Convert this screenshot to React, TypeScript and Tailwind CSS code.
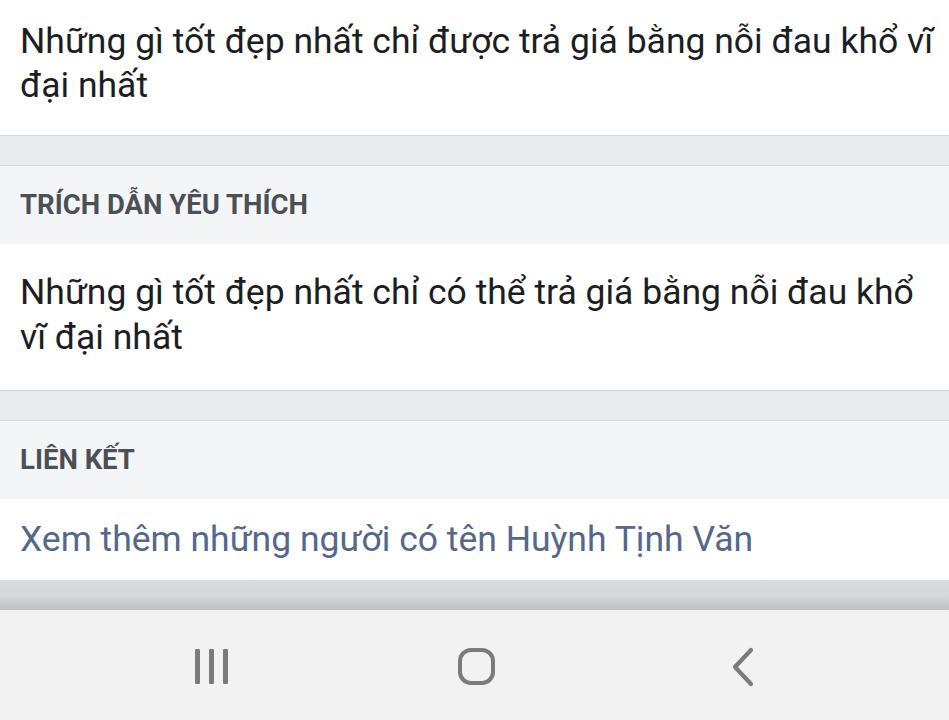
import React from "react";

const font = { fontFamily: "Roboto, 'Noto Sans', sans-serif" };

function Band() {
  return <div className="h-[31px] bg-[#e9eaee] border-y border-[#d6d7da]" />;
}

function Header({ children }: { children: React.ReactNode }) {
  return (
    <div className="h-[78px] bg-[#f4f5f7] flex items-center pl-5">
      <span className="text-[27.5px] font-bold text-[#4b4f56] leading-none">{children}</span>
    </div>
  );
}

export default function App() {
  return (
    <div className="w-[949px] h-[720px] overflow-hidden bg-white flex flex-col" style={font}>
      <div className="h-[135px] bg-white pl-5 pr-[12px] pt-[19px]">
        <p className="text-[35.5px] leading-[44px] text-[#1c1e21]">
          Những gì tốt đẹp nhất chỉ được trả giá bằng nỗi đau khổ vĩ đại nhất
        </p>
      </div>
      <Band />
      <Header>TRÍCH DẪN YÊU THÍCH</Header>
      <div className="h-[146px] bg-white pl-5 pr-[12px] pt-[26px]">
        <p className="text-[35.5px] leading-[45px] text-[#1c1e21]">
          Những gì tốt đẹp nhất chỉ có thể trả giá bằng nỗi đau khổ vĩ đại nhất
        </p>
      </div>
      <Band />
      <Header>LIÊN KẾT</Header>
      <div className="h-[81px] bg-white pl-5 flex items-center">
        <span className="text-[35.5px] leading-none text-[#55688a]">Xem thêm những người có tên Huỳnh Tịnh Văn</span>
      </div>
      <div className="h-[30px] bg-gradient-to-b from-[#d9dbdf] via-[#d6d8dc] to-[#bfc1c5]" />
      <div className="flex-1 bg-[#f2f2f2] relative flex items-center">
        <div className="absolute left-[195px] top-[39px] flex gap-[9.5px]">
          <div className="w-[4.5px] h-[35px] bg-[#7b7b7b] rounded-[1px]" />
          <div className="w-[4.5px] h-[35px] bg-[#7b7b7b] rounded-[1px]" />
          <div className="w-[4.5px] h-[35px] bg-[#7b7b7b] rounded-[1px]" />
        </div>
        <div className="absolute left-[458px] top-[38px] w-[37px] h-[37px] border-[4px] border-[#7b7b7b] rounded-[13px]" />
        <svg className="absolute left-[728px] top-[36px]" width="30" height="42" viewBox="0 0 30 42">
          <path d="M23 4 L7 21 L23 38" fill="none" stroke="#7b7b7b" strokeWidth="4.2" strokeLinecap="round" strokeLinejoin="round" />
        </svg>
      </div>
    </div>
  );
}
